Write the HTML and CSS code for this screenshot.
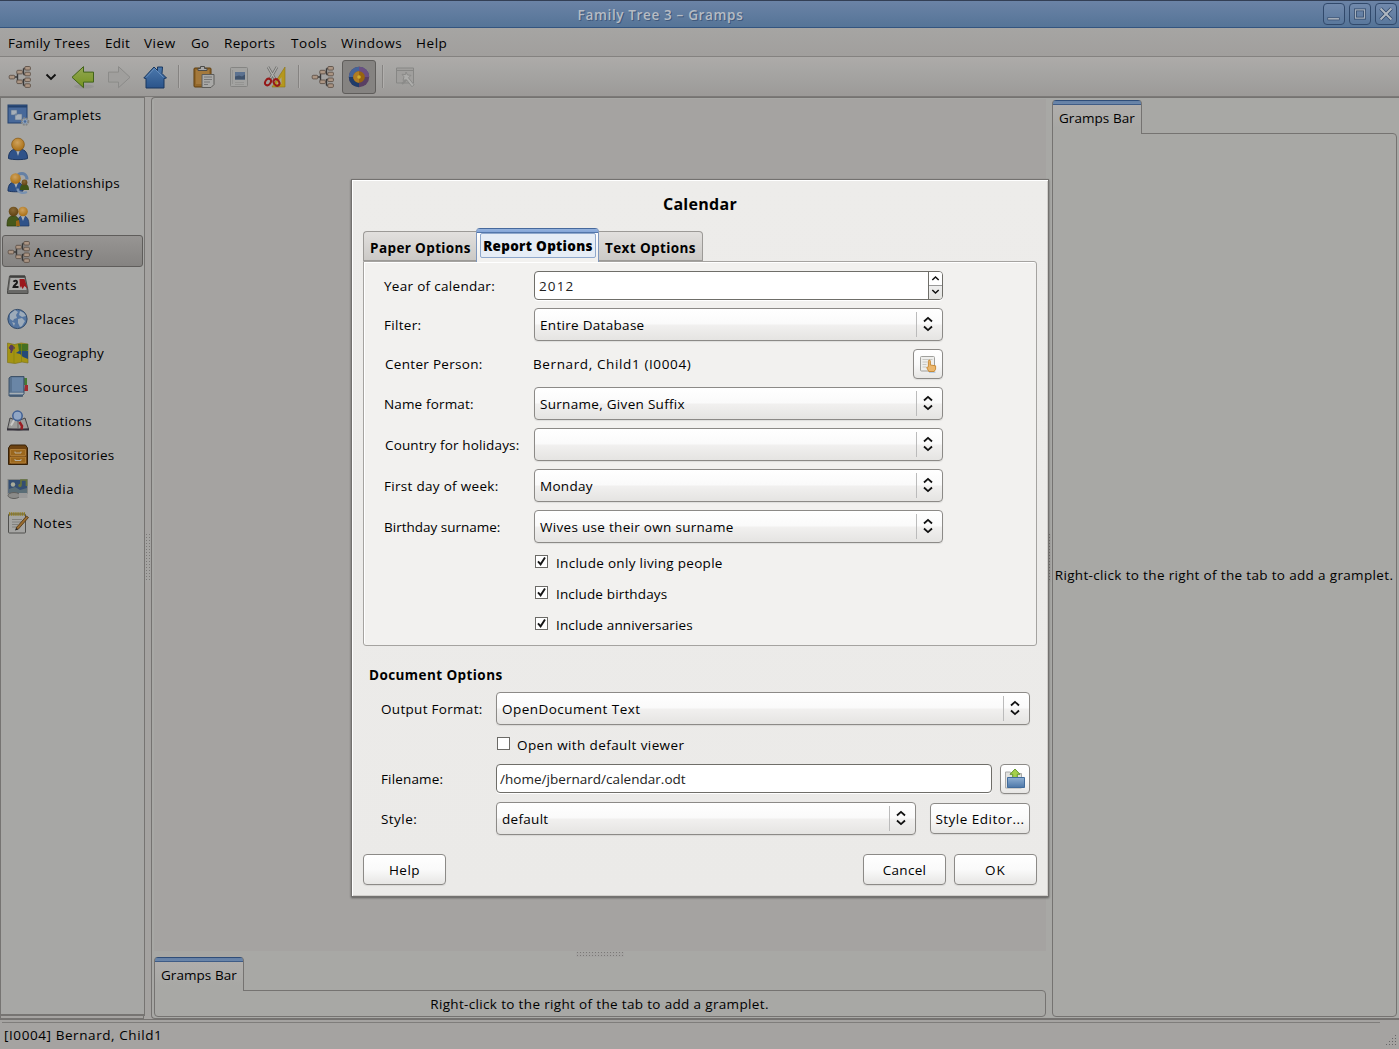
FILE: index.html
```html
<!DOCTYPE html>
<html lang="en">
<head>
<meta charset="utf-8">
<title>Family Tree 3 - Gramps</title>
<link rel="stylesheet" href="styles.css">
</head>
<body>
<svg width="0" height="0" class="defs">
  <defs>
    <linearGradient id="gHome" x1="0" y1="0" x2="0" y2="1"><stop offset="0" stop-color="#4c79ad"/><stop offset="1" stop-color="#2b548a"/></linearGradient>
    <linearGradient id="gBack" x1="0" y1="0" x2="0" y2="1"><stop offset="0" stop-color="#93a653"/><stop offset="1" stop-color="#74931f"/></linearGradient>
    <radialGradient id="gHead" cx=".45" cy=".35" r=".65"><stop offset="0" stop-color="#cfa25c"/><stop offset="1" stop-color="#a86e14"/></radialGradient>
    <radialGradient id="gBrown" cx=".45" cy=".35" r=".65"><stop offset="0" stop-color="#8a6a36"/><stop offset="1" stop-color="#5e4113"/></radialGradient>
    <linearGradient id="gFolder" x1="0" y1="0" x2="0" y2="1"><stop offset="0" stop-color="#8fb0d4"/><stop offset="1" stop-color="#4d77a8"/></linearGradient>
    <symbol id="tree" viewBox="0 0 24 24">
      <path d="M6 12h4M9.500 7.500v9M9.500 7.500h4M9.500 16.500h4M15.500 3.500h3M15.500 9.500h3M15.500 14.500h3M15.500 20.500h3M15.500 14v6.500M15.500 3.500v6" fill="none" stroke="#383838" stroke-width="1.400"/>
      <g fill="#ab9583" stroke="#5d5148" stroke-width=".9"><rect x="1.200" y="10.300" width="5.600" height="3.600" rx="1"/><rect x="8.800" y="5.300" width="5.600" height="3.600" rx="1"/><rect x="8.800" y="15" width="5.600" height="3.600" rx="1"/><rect x="16.800" y="1.500" width="5.600" height="3.600" rx="1"/><rect x="16.800" y="7.200" width="5.600" height="3.600" rx="1"/><rect x="16.800" y="13" width="5.600" height="3.600" rx="1"/><rect x="16.800" y="18.800" width="5.600" height="3.600" rx="1"/></g>
    </symbol>
    <symbol id="updown" viewBox="0 0 10 16"><path d="M1 5.500 5 1.900 9 5.500M1 10.500 5 14.100 9 10.500" fill="none" stroke="#111" stroke-width="1.800"/></symbol>
    <symbol id="tick" viewBox="0 0 11 11"><path d="M2 5.300 4.600 8.300 9 1.500" fill="none" stroke="#151515" stroke-width="1.900"/></symbol>
  </defs>
</svg>

<header class="titlebar">
  <h1>Family Tree 3 – Gramps</h1>
  <div class="winbtns">
    <svg viewBox="0 0 22 22"><path d="M4 15h13v2.500H4z" fill="#b0b8c0" stroke="#31496b" stroke-width=".8"/></svg>
    <svg viewBox="0 0 22 22"><path d="M6 6.500h10v9H6z" fill="none" stroke="#31496b" stroke-width="3.200"/><path d="M6 6.500h10v9H6z" fill="none" stroke="#a5b0bd" stroke-width="1.400"/></svg>
    <svg viewBox="0 0 22 22"><path d="m5 5 12 12M17 5 5 17" stroke="#31496b" stroke-width="4"/><path d="m5 5 12 12M17 5 5 17" stroke="#b0b8c0" stroke-width="2.200"/></svg>
  </div>
</header>

<nav class="menubar">
  <span class="m1">Family Trees</span><span class="m2">Edit</span><span class="m3">View</span><span class="m4">Go</span><span class="m5">Reports</span><span class="m6">Tools</span><span class="m7">Windows</span><span class="m8">Help</span>
</nav>

<div class="toolbar">
  <svg class="ico t-tree"><use href="#tree"/></svg>
  <svg class="t-drop" viewBox="0 0 12 8"><path d="M1.500 1.500 6 6l4.500-4.500" fill="none" stroke="#111" stroke-width="1.900"/></svg>
  <svg class="ico t-back" viewBox="0 0 24 24"><ellipse cx="13" cy="21.500" rx="10" ry="2" fill="#888" opacity=".4"/><path d="M1 12.300 12.500 1.600v5.500h10v10h-10v5.600z" fill="url(#gBack)" stroke="#416319"/></svg>
  <svg class="ico t-fwd" viewBox="0 0 24 24"><path d="M23 12.300 11.500 1.600v5.500h-10v10h10v5.600z" fill="#a09f9d" stroke="#8b8b89"/></svg>
  <svg class="ico t-home" viewBox="0 0 24 24"><path d="M.8 13 11 2l3.500 3.500V2h5l-.5 6.500 4.500 4.500-2.500.5v9.500h-18V13.500z" fill="url(#gHome)" stroke="#18375f"/><path d="m3 12.500 8.500-9 9 9" fill="none" stroke="#6f94c0" stroke-width=".8"/></svg>
  <i class="sep"></i>
  <svg class="ico t-paste" viewBox="0 0 24 24"><rect x="2" y="3" width="17" height="19" rx="1" fill="#93682b" stroke="#5f3d0d"/><rect x="4" y="5" width="13" height="14" fill="#a4793c"/><path d="M6 5.500V3.500h2.500V1.500h4v2H15v2z" fill="#aaa" stroke="#4c4c4a"/><path d="M10 9.500h12v10l-3 3h-9z" fill="#a9a9a7" stroke="#5c5c5a"/><path d="M12 12h8M12 14.500h8M12 17h6M12 19.500h4" stroke="#777"/></svg>
  <svg class="ico t-clip" viewBox="0 0 24 24"><rect x="3.500" y="2.500" width="17" height="19" rx="1" fill="#a3a3a1" stroke="#858583"/><rect x="8" y="7" width="10" height="7.500" fill="#5c7290"/><path d="M8 14.500v-3l4-1 3 1 3-2v5z" fill="#3f526b"/><path d="M5.500 5v14M8 17.500h9M8 19.500h9" stroke="#949492"/></svg>
  <svg class="ico t-cut" viewBox="0 0 24 24"><path d="M22 2v20H9z" fill="#b5971d" stroke="#8c7316" stroke-width=".6"/><path d="M18.500 12v7h-5z" fill="#aaa58e"/><path d="m5 2 7 12M14 2 7 14" stroke="#6c6c6a" stroke-width="2.600"/><path d="m5 2 7 12M14 2 7 14" stroke="#b0b0ae" stroke-width="1.300"/><ellipse cx="5" cy="17" rx="2.600" ry="3.500" transform="rotate(35 5 17)" fill="none" stroke="#951919" stroke-width="2"/><ellipse cx="13.500" cy="17.500" rx="2.600" ry="3.500" transform="rotate(-35 13.500 17.500)" fill="none" stroke="#951919" stroke-width="2"/></svg>
  <i class="sep s2"></i>
  <svg class="ico t-ped"><use href="#tree"/></svg>
  <span class="toggle"><svg class="ico" viewBox="0 0 24 24"><circle cx="12" cy="12" r="10.200" fill="#593f63"/><path d="M12 1.800A10.200 10.200 0 0 0 1.800 12h20.400A10.200 10.200 0 0 0 12 1.800z" fill="#44639a"/><path d="M12 1.800A10.200 10.200 0 0 1 22.200 12H12z" fill="#6b4e80"/><path d="M1.800 12A10.200 10.200 0 0 0 12 22.200V12z" fill="#203c69"/><circle cx="12" cy="12" r="5.800" fill="#98640f"/><path d="M12 6.200a5.800 5.800 0 0 0 0 11.600z" fill="#b07c24"/><circle cx="12" cy="12" r="1.800" fill="#cfae30"/></svg></span>
  <i class="sep s3"></i>
  <svg class="ico t-cfg" viewBox="0 0 24 24"><path d="M3.500 3h17v15h-17z" fill="#a09f9d" stroke="#878785"/><path d="M3.500 5.500h17" stroke="#878785"/><path d="m9 19 5-5" stroke="#8b8b89" stroke-width="2"/><path d="m13 7 1.500 3 3.500.3-2.500 2.500 5.500 7-2 2-5.500-7-3.500.5 1-3.500-2-2.500 3.500.3z" fill="#adadab" stroke="#8b8b89"/></svg>
</div>

<main class="main">
  <aside class="side">
    <ul>
      <li><svg class="ico" viewBox="0 0 24 24"><rect x="2" y="2" width="19" height="18" fill="#48699a" stroke="#23416c"/><path d="M2 3.500h19" stroke="#23416c" stroke-width="2"/><path d="M5 7h6v5H5zM9 11h7v6H9z" fill="#a7afb8" stroke="#59708e" stroke-width=".6"/><circle cx="19" cy="18.500" r="3.300" fill="#8fa3ba" stroke="#858583" stroke-width="2" stroke-dasharray="1.700 1"/><circle cx="19" cy="18.500" r="1.300" fill="#49699a"/></svg>Gramplets</li>
      <li><svg class="ico" viewBox="0 0 24 24"><path d="M2.500 21.500c0-7 3-9.500 9.500-9.500s9.500 2.500 9.500 9.500c-3 1.500-16 1.500-19 0z" fill="#2f5289" stroke="#1d3660"/><path d="m10 13 2 6 2-6z" fill="#a9b0b8"/><circle cx="12" cy="7.500" r="6.400" fill="url(#gHead)" stroke="#7c4f0d" stroke-width=".6"/></svg><span class="n">People</span></li>
      <li><svg class="ico" viewBox="0 0 24 24"><path d="M12 3.500c6-3 9 1 9 5" fill="none" stroke="#6580a4" stroke-width="3"/><path d="M2 20c0-7 3-9 8-9s7 3 7 9c-3 1-12 1-15 0z" fill="#2f5289" stroke="#1d3660"/><path d="m8 12 2 5 2-5z" fill="#a9b0b8"/><circle cx="9.500" cy="7.500" r="5.300" fill="url(#gHead)"/><path d="M14 19c0-5 2-6 4.500-6s4.500 1 4.500 6z" fill="#3f5415"/><circle cx="18.500" cy="11.500" r="2.900" fill="url(#gBrown)"/><path d="M11.500 17.500c.5 5 6 5 9.500 3.500" fill="none" stroke="#7891b0" stroke-width="2.400"/></svg><span class="r">Relationships</span></li>
      <li><svg class="ico" viewBox="0 0 24 24"><path d="M11 21c0-7 2-10 6-10s6 3 6 10z" fill="#2f5289" stroke="#1d3660" stroke-width=".7"/><path d="m15 11 2 5 2-5z" fill="#a9b0b8"/><circle cx="17" cy="6.500" r="4.800" fill="url(#gHead)"/><path d="M1 21c0-8 2-10 6.500-10S13 14 13 21z" fill="#46591b" stroke="#2d3b0d" stroke-width=".7"/><circle cx="7.500" cy="6.500" r="4.800" fill="url(#gBrown)"/><path d="M10 21v-5l3-1 1 6z" fill="#9a6515"/></svg><span class="f">Families</span></li>
      <li class="on"><svg class="ico"><use href="#tree"/></svg><span class="a">Ancestry</span></li>
      <li><svg class="ico" viewBox="0 0 24 24"><path d="M3.500 3h15.500l3 14.500v3H1.500v-3z" fill="#686866" stroke="#4b4b49"/><path d="M4.500 5h14l2 12H3z" fill="#acacaa"/><path d="M4 3.500h15" stroke="#40403e" stroke-width="2"/><path d="M7.500 8.800c1-1.800 4-1.300 3.500.7-.3 1.500-3 2.500-3.500 4.500h5" fill="none" stroke="#1a1a1a" stroke-width="1.900"/><path d="M13.500 6h5l3 9.500-3-2.500-2 3-1.500-3-1 2z" fill="#9b181c"/></svg><span class="e">Events</span></li>
      <li><svg class="ico" viewBox="0 0 24 24"><circle cx="11.500" cy="12" r="9.600" fill="#5475a0" stroke="#2f4868"/><path d="m4 7 5-4 3 2-2 3 1 3-3 1-1 2-3-2zM14 4l4 2 2 3-4 1-3-2zM12 12l4-1 3 3-3 5-2 1-2-4zM6 15l3 1-1 3z" fill="#9dabb9"/></svg><span class="n">Places</span></li>
      <li><svg class="ico" viewBox="0 0 24 24"><path d="m1.500 2 7 1.500L15 2l7 1v19l-6-1-7 1.500-7.500-1z" fill="#a49413" stroke="#7e741d" stroke-width=".7"/><path d="M12 3h10v6l-5 3-4-2z" fill="#447021"/><path d="M13 10h9v8l-5-2-3-3-4-1z" fill="#244a78"/><path d="m5 4-2 3 2 2v3l2-4 2-1-2-2z" fill="#573b59" stroke="#573b59"/><path d="M15.500 3v18M8 3v19" stroke="#82830f" opacity=".7"/></svg><span class="g">Geography</span></li>
      <li><svg class="ico" viewBox="0 0 24 24"><path d="M18 3h3v7h-3z" fill="#477c32"/><path d="M19 10h3v6h-4z" fill="#a4292d"/><path d="M3 3 5 1.500h13V19l-2 2H3z" fill="#58728f" stroke="#3e5268"/><path d="M6 2.500h11v14H6z" fill="#6a86a6"/><path d="M3.500 18.500h14" stroke="#a8b0b5" stroke-width="1.500"/><path d="M4 21h13" stroke="#445a70" stroke-width="1.500"/></svg><span class="s">Sources</span></li>
      <li><svg class="ico" viewBox="0 0 24 24"><path d="m4 9 8 3 7-3 3.500 11-10 1-11-1z" fill="#9d9d9b" stroke="#454547"/><path d="M1 20.500h22" stroke="#34303a" stroke-width="2"/><path d="M12 12v8" stroke="#666"/><path d="m13.500 13 2.500 4-.5 3.500" fill="none" stroke="#991d22" stroke-width="2.500"/><path d="m8.500 10.500-3.500 6" stroke="#c9c9c7" stroke-width="2"/><circle cx="11.500" cy="6.800" r="4.700" fill="#91a6c4" stroke="#3f5f93" stroke-width="1.500"/></svg><span class="n">Citations</span></li>
      <li><svg class="ico" viewBox="0 0 24 24"><path d="M4.500 2h15l2 3v16.500h-19V5z" fill="#6d4311" stroke="#372107"/><path d="M4.500 6.500h15v6h-15zM4.500 14h15v6h-15z" fill="#9b671d" stroke="#c08d43" stroke-width=".7"/><path d="M9 8.500V10h6V8.500M9 16v1.500h6V16" fill="none" stroke="#b8b0a0"/></svg>Repositories</li>
      <li><svg class="ico" viewBox="0 0 24 24"><rect x="2" y="2.500" width="19.500" height="14" fill="#344e72" stroke="#838583"/><circle cx="7" cy="7.500" r="2.200" fill="#a9ab9a"/><path d="M3 16v-4l6-2 5 3 7-2v5z" fill="#5a6d76"/><path d="M15 8V3h5.500v6" fill="none" stroke="#66733c" stroke-width="1.700"/><circle cx="14" cy="8.500" r="1.700" fill="#66733c"/><ellipse cx="8" cy="18.500" rx="6" ry="3" fill="#8b8b89" stroke="#5f5f5d"/><path d="M13 16h8.500v5H13z" fill="#999"/></svg><span class="w">Media</span></li>
      <li><svg class="ico" viewBox="0 0 24 24"><rect x="2.500" y="3" width="17" height="19" rx="1" fill="#a5a5a3" stroke="#50504e"/><path d="M3 3h16" stroke="#8f7b1e" stroke-width="3.500" stroke-dasharray="1.300 .8"/><path d="M6 8.500h10M6 11h9M6 13.500h6M6 16h5" stroke="#82827f"/><path d="M10 17 20.500 5l2 1.500L12 18.500z" fill="#9a6c30" stroke="#4e3410" stroke-width=".8"/><path d="m9 19.500 1-2.500 2 1.500z" fill="#222"/></svg><span class="w">Notes</span></li>
    </ul>
    <div class="side-foot"></div>
  </aside>
  <div class="gutter"><i class="dots v"></i></div>
  <section class="work">
    <div class="center">
      <div class="canvas"></div>
      <div class="hgrip"><i class="dots h"></i></div>
      <div class="book">
        <div class="gtab">Gramps Bar</div>
        <div class="gpage">Right-click to the right of the tab to add a gramplet.</div>
      </div>
    </div>
    <div class="split"><i class="dots v thin"></i></div>
    <div class="book right">
      <div class="gtab">Gramps Bar</div>
      <div class="gpage">Right-click to the right of the tab to add a gramplet.</div>
    </div>
  </section>
</main>

<footer class="status"><span>[I0004] Bernard, Child1</span>
  <svg viewBox="0 0 12 12"><path d="M10 1h1v1h-1zM10 4h1v1h-1zM7 4h1v1H7zM10 7h1v1h-1zM7 7h1v1H7zM4 7h1v1H4zM10 10h1v1h-1zM7 10h1v1H7zM4 10h1v1H4zM1 10h1v1H1z" fill="#666"/></svg>
</footer>

<div class="dialog" role="dialog">
  <h2>Calendar</h2>
  <div class="tabs"><span class="tab first">Paper Options</span><span class="tab active"><b>Report Options</b></span><span class="tab last">Text Options</span></div>
  <div class="page">
    <div class="row"><label>Year of calendar:</label><div class="spin"><span class="year">2012</span><div class="steps"><svg viewBox="0 0 12 13"><path d="M2.800 8 6 5l3.200 3" fill="none" stroke="#111" stroke-width="1.500"/></svg><svg viewBox="0 0 12 13"><path d="M2.800 5 6 8l3.200-3" fill="none" stroke="#111" stroke-width="1.500"/></svg></div></div></div>
    <div class="row"><label>Filter:</label><div class="combo"><span>Entire Database</span><svg><use href="#updown"/></svg></div></div>
    <div class="row"><label class="in">Center Person:</label><span class="person">Bernard, Child1 (I0004)</span><button class="ibtn"><svg viewBox="0 0 18 18"><rect x="1.500" y="1.500" width="14" height="14.500" rx="1" fill="#eeeeec" stroke="#a0a09c"/><path d="M3.500 4.500h10M3.500 7h5M3.500 9.500h4M3.500 12h4" stroke="#c8c8c4"/><path d="M10 17.500h6.500" stroke="#b5cce4" stroke-width="2"/><path d="M9.800 16.500 7.700 12.500l1.700-.7V6.300c0-1.600 2-1.600 2 0V10l5.200.8v3.400l-1.400 2.300z" fill="#ecb76c" stroke="#c4842f" stroke-width=".9"/></svg></button></div>
    <div class="row"><label class="tight">Name format:</label><div class="combo"><span>Surname, Given Suffix</span><svg><use href="#updown"/></svg></div></div>
    <div class="row"><label class="in tight">Country for holidays:</label><div class="combo"><span></span><svg><use href="#updown"/></svg></div></div>
    <div class="row"><label>First day of week:</label><div class="combo"><span>Monday</span><svg><use href="#updown"/></svg></div></div>
    <div class="row"><label class="tighter">Birthday surname:</label><div class="combo"><span>Wives use their own surname</span><svg><use href="#updown"/></svg></div></div>
    <div class="checks">
      <div class="check"><svg class="box"><use href="#tick"/></svg>Include only living people</div>
      <div class="check"><svg class="box"><use href="#tick"/></svg><span class="tight">Include birthdays</span></div>
      <div class="check"><svg class="box"><use href="#tick"/></svg><span class="tight">Include anniversaries</span></div>
    </div>
  </div>
  <h3>Document Options</h3>
  <div class="doc">
    <div class="row"><label>Output Format:</label><div class="combo"><span class="wide">OpenDocument Text</span><svg><use href="#updown"/></svg></div></div>
    <div class="row viewer"><label></label><div class="check"><svg class="box"></svg>Open with default viewer</div></div>
    <div class="row file"><label>Filename:</label><div class="entry">/home/jbernard/calendar.odt</div><button class="ibtn"><svg class="open" viewBox="0 0 22 22"><path d="M1.500 20V4h5l1 1.500h10V20z" fill="#e2e2e0" stroke="#aaa"/><path d="m11 1 5 5.300h-2.700V10H8.700V6.300H6z" fill="#a5d04b" stroke="#5b9022" stroke-width=".9"/><path d="M3.500 9.500h17v10h-17z" fill="url(#gFolder)" stroke="#426c9c"/></svg></button></div>
    <div class="row"><label class="wide">Style:</label><div class="combo"><span>default</span><svg><use href="#updown"/></svg></div><button class="btn editor">Style Editor...</button></div>
  </div>
  <div class="actions"><button class="btn help">Help</button><span class="grow"></span><button class="btn">Cancel</button><button class="btn ok">OK</button></div>
</div>
</body>
</html>
```
FILE: styles.css
```css
* { box-sizing: border-box; }
body {
  margin: 0;
  width: 1399px;
  height: 1049px;
  overflow: hidden;
  position: relative;
  display: flex;
  flex-direction: column;
  background: #a5a3a1;
  color: #000;
  font: 13.5px/18px "Open Sans", "Noto Sans", sans-serif;
  letter-spacing: .3px;
  white-space: nowrap;
}
h1, h2, h3, ul { margin: 0; padding: 0; }
button { font: inherit; letter-spacing: inherit; color: inherit; padding: 0; }
svg { display: block; flex: none; }
.defs { position: absolute; }
.ico { width: 24px; height: 24px; }
.grow { flex: 1; }
.tight { letter-spacing: .15px; }
.tighter { letter-spacing: 0; }
.wide { letter-spacing: .45px; }

.titlebar {
  height: 28px;
  flex: none;
  display: grid;
  grid-template-columns: 1fr 78px;
  align-items: center;
  border-top: 1px solid #333f55;
  border-bottom: 1px solid #33547f;
  background: linear-gradient(#6b83a6, #557497);
}
.titlebar h1 {
  text-align: center;
  font-size: 13.5px;
  font-weight: 600;
  color: #b6bcc4;
  text-shadow: 1px 1px 0 #40597b;
  letter-spacing: .65px;
  padding-top: 2px;
}
.winbtns { display: flex; gap: 4px; padding-left: 2px; }
.winbtns svg {
  width: 22px;
  height: 22px;
  border: 1px solid #31496b;
  border-radius: 4px;
  background: linear-gradient(#7189ac, #5a789c);
}

.menubar {
  height: 29px;
  flex: none;
  display: flex;
  padding: 6px 0 0 8px;
  border-bottom: 1px solid #848280;
  background: linear-gradient(#a6a5a3, #a19f9d);
}
.m1 { width: 97px; } .m2 { width: 39px; } .m3 { width: 47px; } .m4 { width: 33px; }
.m5 { width: 67px; } .m6 { width: 50px; } .m7 { width: 75px; }
.m3, .m6, .m7, .m8 { letter-spacing: .55px; }

.toolbar {
  height: 40px;
  flex: none;
  display: flex;
  align-items: center;
  padding-left: 8px;
  border-bottom: 1px solid #7b7977;
  background: linear-gradient(#adaba9, #a4a3a1 50%, #9c9a98);
}
.t-drop { width: 12px; height: 8px; margin-left: 13px; }
.t-back { margin-left: 14px; }
.t-fwd { margin-left: 12px; }
.t-home { margin-left: 12px; }
.sep { width: 2px; height: 23px; margin: 0 12px 0 11px; background: linear-gradient(90deg, #858381 50%, #b1afad 50%); }
.t-clip { margin-left: 11px; }
.t-cut { margin-left: 12px; }
.s2 { margin: 0 11px; }
.toggle {
  width: 34px;
  height: 34px;
  margin-left: 7px;
  display: grid;
  place-items: center;
  border: 1px solid #5f5d5b;
  border-radius: 3px;
  background: #858381;
}
.s3 { margin: 0 9px 0 6px; }

.main { height: 922px; flex: none; display: flex; }
.side { width: 145px; display: flex; flex-direction: column; }
.side ul {
  flex: 1;
  list-style: none;
  border: 1px solid #767472;
  border-bottom-width: 2px;
  background: #a7a7a5;
}
.side li {
  height: 34px;
  padding-left: 5px;
  display: flex;
  align-items: center;
  gap: 3px;
}
.side .on {
  height: 32px;
  margin: 1px 1px 1px;
  padding-left: 5px;
  padding-top: 1px;
  border: 1px solid #5f5d5b;
  border-radius: 3px;
  background: linear-gradient(#979593, #858381);
}
.side .on svg { margin-left: -1px; }
.side .n { padding-left: 1px; }
.side .s { padding-left: 2px; letter-spacing: .45px; }
.side .r { letter-spacing: .2px; }
.side .f { letter-spacing: .1px; }
.side .g { letter-spacing: .2px; }
.side .a { letter-spacing: .6px; }
.side .e { letter-spacing: .4px; }
.side .w { letter-spacing: .45px; }
.side-foot { width: 144px; height: 3px; border: 1px solid #767472; border-top: 0; }
.gutter { width: 6px; display: grid; place-items: center; }
.dots {
  display: block;
  background:
    linear-gradient(#a5a4a2 2px, transparent 2px) 0 1px / 3px 3px,
    linear-gradient(90deg, #a5a4a2 1px, #7b7977 1px, #7b7977 2px, #a5a4a2 2px) 0 0 / 3px 3px;
}
.dots.v { width: 6px; height: 48px; }
.dots.thin { width: 3px; }
.dots.h { width: 48px; height: 5px; }
.work {
  width: 1248px;
  display: flex;
  padding: 1px 1px 1px 2px;
  border: 1px solid #757371;
  border-right: 0;
  border-radius: 4px 0 0 4px;
  background: #a8a8a5;
}
.center { width: 892px; display: flex; flex-direction: column; }
.canvas { flex: 1; background: #a5a3a1; }
.hgrip { height: 6px; display: grid; place-items: center; }
.split { width: 6px; display: grid; place-items: center; }
.book { height: 60px; display: flex; flex-direction: column; }
.book.right { width: 345px; height: auto; padding-top: 1px; }
.gtab {
  width: 90px;
  height: 34px;
  margin-bottom: -1px;
  position: relative;
  padding: 9px 0 0 6px;
  letter-spacing: .05px;
  border: 1px solid #757371;
  border-top: 0;
  border-bottom: 0;
  border-radius: 4px 4px 0 0;
  background: linear-gradient(#2f4d78 1px, #6480a5 1px, #6b86aa 4px, #3f5c86 4px, #3f5c86 5px, #b0aeac 5px, #a8a8a5 28px);
}
.gpage {
  flex: 1;
  display: grid;
  place-items: center;
  padding-right: 1px;
  letter-spacing: .34px;
  border: 1px solid #757371;
  border-radius: 0 4px 4px 4px;
  background: #a8a8a5;
}
.status {
  height: 30px;
  flex: none;
  display: flex;
  justify-content: space-between;
  padding: 6px 2px 0 4px;
  letter-spacing: .58px;
  background: linear-gradient(#7f7d7b, #7f7d7b) 2px 2px / 1378px 1px no-repeat;
  border-top: 1px solid #757371;
}
.status svg { width: 12px; height: 12px; margin-top: 8px; }

.dialog {
  position: absolute;
  left: 351px;
  top: 179px;
  width: 698px;
  height: 718px;
  display: flex;
  flex-direction: column;
  padding: 0 10px;
  border: 1px solid #73716f;
  background: linear-gradient(#edecea, #ebeae8);
  box-shadow: inset 1px 1px 0 #fff, inset -1px -1px 0 #d0cecb, 0 1px 2px rgba(0, 0, 0, .45);
}
h2 { font-size: 16px; line-height: 22px; margin-top: 13px; text-align: center; }
.tabs {
  height: 34px;
  margin: 13px 0 -1px 1px;
  display: flex;
  align-items: flex-end;
  position: relative;
  font-weight: 700;
  font-size: 13.5px;
}
.tab {
  height: 30px;
  padding-top: 7px;
  margin-bottom: 1px;
  text-align: center;
  border: 1px solid #9c9a97;
  background: linear-gradient(#e2e0de, #cbc9c6);
}
.first { width: 113px; border-radius: 4px 0 0 0; border-right: 0; padding-left: 1px; letter-spacing: .37px; }
.last { width: 104px; border-radius: 0 4px 0 0; border-left: 0; letter-spacing: .4px; }
.active {
  width: 123px;
  height: 34px;
  margin-bottom: 0;
  padding: 5px 3px 3px;
  border: 1px solid #7f97bd;
  border-top: 0;
  border-bottom: 0;
  border-radius: 4px 4px 0 0;
  background: linear-gradient(#47699c 1px, #94b2dd 1px, #85a6d8 4px, #5376aa 4px, #5376aa 5px, #fff 5px, #f2f1ef 30px);
}
.active b {
  display: block;
  height: 25px;
  padding-top: 3px;
  border: 1px solid #8fa8cc;
  border-radius: 2px;
  background: #e6edf6;
  margin: 0 -1px 0 0;
}
.page {
  height: 385px;
  margin: 0 0 0 1px;
  width: 674px;
  padding: 9px 93px 0 20px;
  display: flex;
  flex-direction: column;
  gap: 8px;
  border: 1px solid #a5a3a0;
  border-radius: 0 3px 3px 3px;
  background: #f2f1ef;
  box-shadow: inset 1px 1px 0 #fff;
}
.row { display: flex; align-items: center; }
.page label { width: 150px; }
.page label.in { padding-left: 1px; }
.combo {
  flex: 1;
  height: 33px;
  display: flex;
  align-items: center;
  justify-content: space-between;
  padding: 0 9px 0 5px;
  border: 1px solid #8c8a87;
  border-radius: 4px;
  background: linear-gradient(90deg, #bbb, #bbb) right 25px center / 1px 25px no-repeat, linear-gradient(#fff, #fafafa 48%, #f1f0ef 52%, #e5e4e2);
  box-shadow: 0 1px 1px rgba(0, 0, 0, .08);
}
.combo svg { width: 10px; height: 16px; margin-bottom: 2px; }
.spin, .entry {
  height: 29px;
  border: 1px solid #6f6e69;
  border-radius: 4px;
  background: #fff;
  box-shadow: 0 1px 0 #fff;
  color: #222;
}
.spin { flex: 1; display: flex; justify-content: space-between; align-items: center; padding-left: 4px; }
.year { letter-spacing: 1.1px; }
.steps { width: 14px; height: 27px; border-left: 1px solid #6f6e69; background: linear-gradient(#fff 13px, #999 13px, #999 14px, #eee 14px, #e3e3e0); border-radius: 0 3px 3px 0; }
.steps svg { width: 13px; height: 13px; }
.person { flex: 1; margin-left: -1px; letter-spacing: .62px; }
.ibtn, .btn {
  border: 1px solid #8c8a87;
  border-radius: 4px;
  background: linear-gradient(#fff, #fafafa 50%, #e7e6e4);
  box-shadow: 0 1px 1px rgba(0, 0, 0, .08);
}
.ibtn { width: 30px; height: 30px; display: grid; place-items: center; }
.ibtn svg { width: 18px; height: 18px; }
.ibtn .open { width: 22px; height: 22px; }
.checks { margin: -4px 0 0 151px; }
.check { height: 31px; display: flex; align-items: center; gap: 7px; }
.box { width: 13px; height: 13px; border: 1px solid #6b6a66; background: #fff; margin: -3px 0 0 1px; }
.checks .box { margin-left: 0; margin-right: 1px; }
h3 { font-size: 13.5px; line-height: 18px; margin: 20px 0 8px 7px; letter-spacing: .42px; }
.doc { display: flex; flex-direction: column; gap: 8px; padding: 0 8px 0 19px; }
.doc label { width: 115px; }
.viewer .check { height: 23px; letter-spacing: .4px; }
.file { align-items: flex-start; }
.file label { padding-top: 6px; letter-spacing: .15px; }
.entry { flex: 1; padding: 5px 3px; margin-right: 8px; letter-spacing: .03px; }
.btn { width: 83px; height: 31px; }
.help { letter-spacing: .5px; }
.ok { letter-spacing: 1px; }
.editor { width: 100px; margin-left: 14px; letter-spacing: .5px; }
.actions { display: flex; gap: 8px; margin: 19px 1px 0; }
.actions .grow { margin-right: -8px; }
```
